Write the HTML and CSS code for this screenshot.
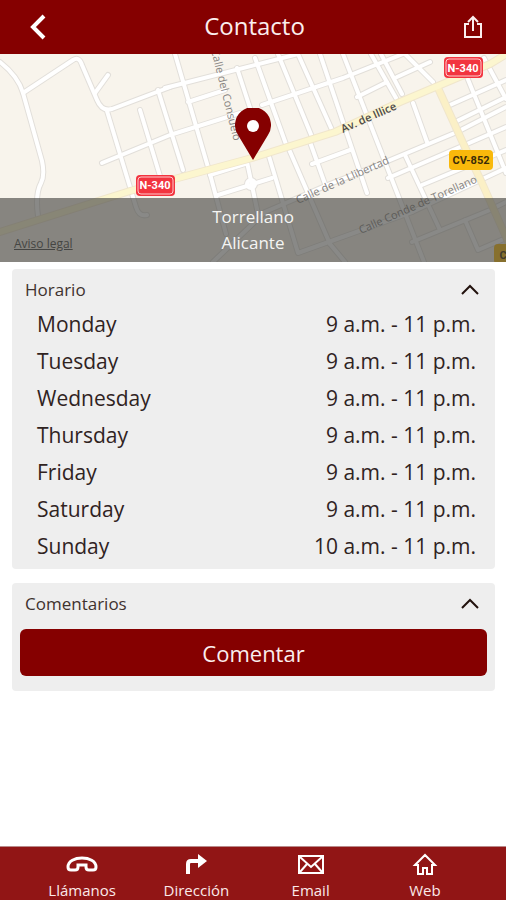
FILE: index.html
```
<!DOCTYPE html>
<html lang="es">
<head>
    <meta charset="UTF-8">
    <meta name="viewport" content="width=device-width, initial-scale=1.0">
    <title>Contacto</title>
    <link rel="stylesheet" href="styles.css">
</head>
<body>
    <header class="top-nav">
        <button class="icon-button" type="button" aria-label="Volver">
            <svg width="16" height="26" viewBox="0 0 16 26"><path d="M14 2 L3 13 L14 24" fill="none" stroke="#fff" stroke-width="4"/></svg>
        </button>
        <h1>Contacto</h1>
        <button class="icon-button" type="button" aria-label="Compartir">
            <svg width="20" height="24" viewBox="0 0 20 24" fill="none" stroke="#fbeeee" stroke-width="2"><path d="M6 9 H2 V22 H18 V9 H14"/><path d="M10 16 V2 M5 7 L10 2 L15 7"/></svg>
        </button>
    </header>

    <section class="map">
        <svg class="map-drawing" viewBox="0 0 506 208" preserveAspectRatio="xMidYMid slice">
            <defs>
                <g id="streets">
                    <path d="M0 8 Q18 22 23 39 L42 107 Q45 121 41 129 Q35 140 38 162"/>
                    <path d="M23 39 L73 6 Q79 2 82 11 L97 46 Q102 58 112 55 L170 33"/>
                    <path d="M95 39 L108 21 M107 57 L136 153 Q139 163 147 161"/>
                    <path d="M102 109 L170 81 L240 59 M140 56 L160 122 M158 36 L183 116"/>
                    <path d="M175 0 L210 120 L226 180 M165 34 L298 0 M188 48 L225 36"/>
                    <path d="M237 14 L252 60 M255 4 L287 93 M278 0 L312 83 M298 0 L332 76"/>
                    <path d="M262 51 L343 24 L403 0 M268 99 L298 199 L412 158"/>
                    <path d="M288 93 L330 190 M210 121 L245 110 M218 141 L272 124 M247 108 L258 160"/>
                    <path d="M213 208 L265 158 L330 130 L383 109 L457 78 L506 53"/>
                    <path d="M310 88 L325 130 M312 110 L350 96 M320 0 L367 139 M343 0 L424 208"/>
                    <path d="M371 0 L396 44 M381 0 L402 40 M405 0 L433 28 M357 43 L387 28 M397 23 L430 8"/>
                    <path d="M413 49 L427 88 M388 124 L460 93 L506 73 M405 101 L440 176"/>
                    <path d="M422 131 L506 96 M412 188 L490 156 L506 148 M465 166 L478 196 L506 184"/>
                    <path d="M450 51 L506 26 M455 68 L506 43 M467 23 L506 119 M484 4 L506 45"/>
                    <path d="M412 158 L506 114 M330 190 L345 208"/>
                    <circle cx="251" cy="130" r="4"/>
                </g>
            </defs>
            <rect width="506" height="208" fill="#f8f4ec"/>
            <use href="#streets" class="street-edge"/>
            <use href="#streets" class="street"/>
            <path class="road-edge" d="M438 34 L463 89 L482 129 L510 192"/>
            <path class="road-edge" d="M0 178 L130 137 L252 104 L335 78 L400 48 L490 10 L510 -2"/>
            <path class="road" d="M438 34 L463 89 L482 129 L510 192"/>
            <path class="road main-road" d="M0 178 L130 137 L252 104 L335 78 L400 48 L490 10 L510 -2"/>

            <g class="street-name">
                <text transform="translate(211 -4) rotate(76)">Calle del Consuelo</text>
                <text transform="translate(298 150) rotate(-24)">Calle de la Llibertad</text>
                <text transform="translate(361 180) rotate(-24)">Calle Conde de Torellano</text>
                <text class="avenue" transform="translate(343 79) rotate(-24)">Av. de Illice</text>
            </g>

            <g class="shield red">
                <rect x="136" y="121" width="39" height="21" rx="4"/>
                <rect class="inner" x="138" y="123" width="35" height="17" rx="3"/>
                <text x="155" y="135">N-340</text>
                <rect x="444" y="3" width="39" height="21" rx="4"/>
                <rect class="inner" x="446" y="5" width="35" height="17" rx="3"/>
                <text x="463" y="18">N-340</text>
            </g>
            <g class="shield yellow">
                <rect x="449" y="96" width="44" height="20" rx="4"/>
                <text x="471" y="110">CV-852</text>
                <rect x="494" y="190" width="44" height="20" rx="4"/>
                <text x="518" y="205">CV-852</text>
            </g>
        </svg>
        <svg class="pin" width="36" height="52" viewBox="0 0 36 52"><path d="M18 52 L3 27 A18 18 0 1 1 33 27 Z" fill="#850000"/><circle cx="18" cy="18" r="6" fill="#fff"/></svg>
        <div class="address">
            <a href="#">Aviso legal</a>
            <p>Torrellano<br>Alicante</p>
        </div>
    </section>

    <main class="main-content">
        <section class="card">
            <button class="card-title" type="button" aria-expanded="true">
                Horario
                <svg width="20" height="12" viewBox="0 0 20 12"><path d="M2 11 L10 3 L18 11" fill="none" stroke="#22120d" stroke-width="2"/></svg>
            </button>
            <table class="hours">
                <tr><th scope="row">Monday</th><td>9 a.m. - 11 p.m.</td></tr>
                <tr><th scope="row">Tuesday</th><td>9 a.m. - 11 p.m.</td></tr>
                <tr><th scope="row">Wednesday</th><td>9 a.m. - 11 p.m.</td></tr>
                <tr><th scope="row">Thursday</th><td>9 a.m. - 11 p.m.</td></tr>
                <tr><th scope="row">Friday</th><td>9 a.m. - 11 p.m.</td></tr>
                <tr><th scope="row">Saturday</th><td>9 a.m. - 11 p.m.</td></tr>
                <tr><th scope="row">Sunday</th><td>10 a.m. - 11 p.m.</td></tr>
            </table>
        </section>

        <section class="card">
            <button class="card-title" type="button" aria-expanded="true">
                Comentarios
                <svg width="20" height="12" viewBox="0 0 20 12"><path d="M2 11 L10 3 L18 11" fill="none" stroke="#22120d" stroke-width="2"/></svg>
            </button>
            <button class="comment-button" type="button">Comentar</button>
        </section>
    </main>

    <nav class="bottom-nav">
        <a href="#">
            <svg width="32" height="24" viewBox="0 0 32 24"><path d="M2 15 C2 3 30 3 30 15 Q30 18 27 18 H23 Q20 18 20 15 V13 H12 V15 Q12 18 9 18 H5 Q2 18 2 15 Z" stroke-width="3"/></svg>
            Llámanos
        </a>
        <a href="#">
            <svg width="32" height="24" viewBox="0 0 32 24"><path d="M8 22 V12 Q8 9 11 9 H19" stroke-width="4"/><path d="M18 2 L27 9 L18 16 Z" fill="#fff" stroke="none"/></svg>
            Dirección
        </a>
        <a href="#">
            <svg width="32" height="24" viewBox="0 0 32 24"><path d="M4 4 H28 V21 H4 Z M5 5 L16 15 L27 5 M5 20 L12 12 M27 20 L20 12"/></svg>
            Email
        </a>
        <a href="#">
            <svg width="32" height="24" viewBox="0 0 32 24"><path d="M6 13 L16 3 L26 13 H23 V22 H18 V16 H14 V22 H9 V13 Z"/></svg>
            Web
        </a>
    </nav>
</body>
</html>
```

FILE: styles.css
```
* {
    box-sizing: border-box;
}

body {
    background-color: #fff;
    color: #30231f;
    font-family: "Open Sans", "Noto Sans", sans-serif;
    margin: 0;
    min-height: 100vh;
    display: flex;
    flex-direction: column;
}

button {
    font-family: inherit;
    border: none;
    cursor: pointer;
}

svg {
    display: block;
}

.top-nav {
    background-color: #850000;
    color: #fbeeee;
    height: 54px;
    padding: 0 23px 0 30px;
    display: flex;
    align-items: center;
    justify-content: space-between;
}

.top-nav h1 {
    margin: 0;
    padding-bottom: 3px;
    font-size: 24px;
    font-weight: 400;
}

.icon-button {
    background: none;
    padding: 0;
}

.map {
    position: relative;
    height: 208px;
    overflow: hidden;
}

.map-drawing {
    width: 100%;
    height: 100%;
}

.street,
.street-edge,
.road,
.road-edge {
    fill: none;
    stroke-linecap: round;
    stroke-linejoin: round;
}

.street-edge {
    stroke: #e2dfda;
    stroke-width: 6;
}

.street {
    stroke: #fff;
    stroke-width: 4;
}

.road-edge {
    stroke: #f0e6cc;
    stroke-width: 8;
}

.road {
    stroke: #fbf0c6;
    stroke-width: 6;
}

.main-road {
    stroke: #fcf6cf;
}

.street-name {
    font-size: 11px;
    fill: #85827f;
}

.street-name .avenue {
    fill: #4d4a48;
    font-weight: 600;
}

.shield {
    font-family: Roboto, sans-serif;
    font-size: 11px;
    font-weight: 700;
    text-anchor: middle;
}

.shield.red {
    fill: #f2343f;
}

.shield .inner {
    stroke: #ffc9cc;
}

.shield.red text {
    fill: #fff;
}

.shield.yellow {
    fill: #f9b90b;
}

.shield.yellow text {
    fill: #3b2c08;
}

.pin {
    position: absolute;
    top: 54px;
    left: calc(50% - 18px);
}

.address {
    position: absolute;
    left: 0;
    right: 0;
    bottom: 0;
    height: 64px;
    background-color: rgba(70, 70, 68, 0.64);
    color: #f5f5f3;
    font-size: 17px;
    line-height: 26px;
    text-align: center;
    padding-top: 6px;
}

.address p {
    margin: 0;
}

.address a {
    position: absolute;
    left: 14px;
    bottom: 10px;
    color: #454543;
    font-size: 12px;
    line-height: 16px;
}

.main-content {
    flex: 1;
    padding: 7px 11px 14px 12px;
    display: flex;
    flex-direction: column;
    gap: 14px;
}

.card {
    background-color: #eee;
    border-radius: 4px;
    padding-bottom: 4px;
}

.card-title {
    background: none;
    color: #40322e;
    width: 100%;
    height: 37px;
    padding: 3px 15px 0 13px;
    display: flex;
    align-items: center;
    justify-content: space-between;
    font-size: 17px;
}

.hours {
    width: 100%;
    border-collapse: collapse;
    font-size: 21px;
    line-height: 37px;
}

.hours th {
    font-weight: 400;
    text-align: left;
    padding: 0 0 0 25px;
}

.hours td {
    text-align: right;
    padding: 0 19px 0 0;
}

.comment-button {
    background-color: #850000;
    color: #fbeeee;
    border-radius: 6px;
    display: block;
    width: calc(100% - 16px);
    height: 47px;
    margin: 9px 8px 11px;
    padding: 0;
    font-size: 22px;
}

.bottom-nav {
    background-color: #911515;
    border-top: 1px solid #b98a8a;
    height: 54px;
    padding: 5px 24px 0 25px;
    display: grid;
    grid-template-columns: repeat(4, 1fr);
}

.bottom-nav a {
    color: #fbe9e9;
    text-decoration: none;
    font-size: 15px;
    line-height: 28px;
    display: flex;
    flex-direction: column;
    align-items: center;
}

.bottom-nav svg {
    fill: none;
    stroke: #fff;
    stroke-width: 2;
}
```
